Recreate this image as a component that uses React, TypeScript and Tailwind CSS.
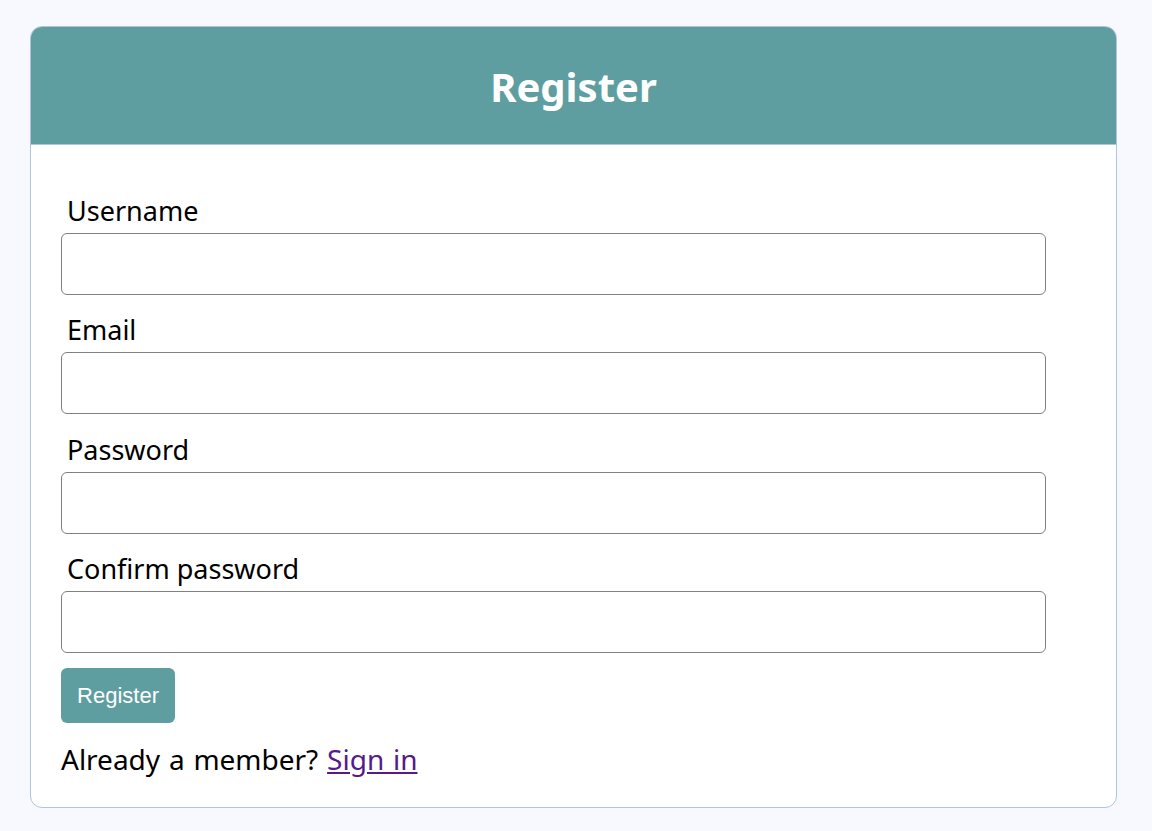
export default function App() {
  const campos = [
    { id: "username", nombre: "Username", tipo: "text" },
    { id: "email", nombre: "Email", tipo: "email" },
    { id: "password", nombre: "Password", tipo: "password" },
    { id: "confirm", nombre: "Confirm password", tipo: "password" },
  ];
  return (
    <div className="min-h-screen bg-[#f8f8ff] px-[30px] pt-[26px] font-['Noto_Sans',sans-serif]">
      <div className="w-[1087px] overflow-hidden rounded-[12px] border border-[#b0c4de] bg-white">
        {/* cabecera */}
        <div className="flex h-[118px] items-center justify-center border-b border-[#b0c4de] bg-[#5f9ea0]">
          <h1 className="pt-[2px] text-[40px] font-bold text-white">Register</h1>
        </div>
        <form className="px-[30px] pt-[31px] pb-[30px]">
          {campos.map((campo, i) => (
            <div key={campo.id} className={i === 0 ? "mt-[18px]" : "mt-[18.33px]"}>
              <label htmlFor={campo.id} className="block pl-[6px] text-[27px] leading-[34px] text-black">
                {campo.nombre}
              </label>
              <input
                id={campo.id}
                type={campo.tipo}
                className="mt-[5px] block h-[62px] w-[985px] rounded-[6px] border border-[#808080] px-3 text-[20px]"
              />
            </div>
          ))}
          <button
            type="button"
            className="mt-[15px] h-[55px] w-[114px] rounded-[6px] bg-[#5f9ea0] font-['Liberation_Sans',sans-serif] text-[22px] text-white"
          >
            Register
          </button>
          <p className="mt-[18px] text-[28px] leading-[36px] text-black [word-spacing:1.5px]">
            Already a member?{" "}
            <a href="#" className="text-[#551a8b] underline">
              Sign in
            </a>
          </p>
        </form>
      </div>
    </div>
  );
}
